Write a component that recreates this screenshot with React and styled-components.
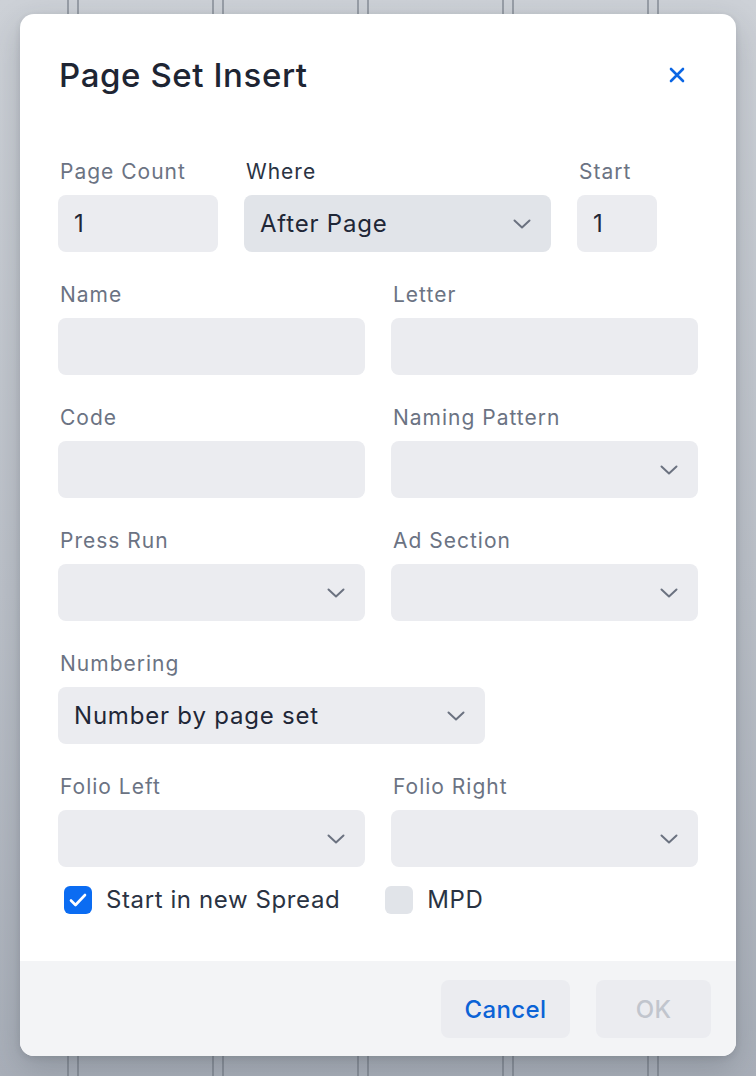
import React from 'react';
import styled, { createGlobalStyle } from 'styled-components';

const GlobalStyle = createGlobalStyle`
  html, body {
    margin: 0;
    padding: 0;
    height: 100%;
  }
  body {
    font-family: Inter, "Noto Sans", "Liberation Sans", sans-serif;
    -webkit-font-smoothing: antialiased;
  }
`;

const Backdrop = styled.div`
  position: fixed;
  inset: 0;
  background: linear-gradient(180deg, #cdd1d7 0%, #bcc1c9 55%, #a9afb9 100%);
  overflow: hidden;
`;

const Sheets = styled.div`
  display: flex;
  gap: 8px;
  margin-left: -68px;
  height: 100%;
`;

const Sheet = styled.div`
  flex: 0 0 133px;
  border-left: 2px solid rgba(110, 117, 128, 0.55);
  border-right: 2px solid rgba(110, 117, 128, 0.55);
`;

const Overlay = styled.div`
  position: fixed;
  inset: 0;
  display: flex;
  justify-content: center;
  align-items: flex-start;
  padding-top: 14px;
`;

const Dialog = styled.div`
  width: 716px;
  background: #ffffff;
  border-radius: 14px;
  box-shadow: 0 12px 32px rgba(40, 48, 60, 0.22), 0 2px 6px rgba(40, 48, 60, 0.12);
  overflow: hidden;
  display: flex;
  flex-direction: column;
`;

const Header = styled.div`
  display: flex;
  align-items: center;
  justify-content: space-between;
  padding: 43px 38px 0 39px;
  height: 36px;
  box-sizing: content-box;
`;

const Title = styled.h2`
  margin: 0;
  font-size: 33px;
  line-height: 36px;
  font-weight: 500;
  color: #1e2533;
  letter-spacing: 0.6px;
`;

const CloseButton = styled.button`
  border: 0;
  background: transparent;
  padding: 0;
  width: 30px;
  height: 30px;
  margin-right: 6px;
  display: flex;
  align-items: center;
  justify-content: center;
  color: #0b66e4;
  cursor: pointer;
`;

const Body = styled.div`
  padding: 67px 38px 47px;
  display: flex;
  flex-direction: column;
  gap: 31px;
`;

const Row = styled.div`
  display: flex;
  gap: 26px;
`;

const Field = styled.div`
  display: flex;
  flex-direction: column;
  gap: 11px;
  width: ${(p) => p.$width}px;
`;

const Label = styled.label`
  font-size: 21px;
  line-height: 24px;
  font-weight: 400;
  color: ${(p) => (p.$active ? '#2a3343' : '#6b7383')};
  padding-left: 2px;
  letter-spacing: 1px;
`;

const Control = styled.div`
  height: 57px;
  border-radius: 8px;
  background: ${(p) => (p.$active ? '#e1e4e9' : '#ebecf0')};
  display: flex;
  align-items: center;
  justify-content: space-between;
  padding: 0 20px 0 16px;
  box-sizing: border-box;
  font-size: 24px;
  color: #1f2737;
`;

const Value = styled.span`
  letter-spacing: 0.8px;
`;

const Chevron = () => (
  <svg width="18" height="10" viewBox="0 0 18 10" fill="none">
    <path d="M1.5 1.5 L9 8.5 L16.5 1.5" stroke="#6b7280" strokeWidth="2" strokeLinecap="round" strokeLinejoin="round" />
  </svg>
);

const Checks = styled.div`
  display: flex;
  align-items: center;
  gap: 45px;
  margin-top: -13px;
  padding-left: 6px;
`;

const CheckItem = styled.label`
  display: flex;
  align-items: center;
  gap: 14px;
  font-size: 24px;
  color: #2a3343;
  letter-spacing: 0.6px;
`;

const Box = styled.span`
  width: 28px;
  height: 28px;
  border-radius: 6px;
  background: ${(p) => (p.$checked ? '#0b6cf2' : '#e1e4e9')};
  display: flex;
  align-items: center;
  justify-content: center;
`;

const Footer = styled.div`
  background: #f3f4f6;
  padding: 19px 25px 18px;
  display: flex;
  justify-content: flex-end;
  gap: 26px;
`;

const Button = styled.button`
  height: 58px;
  min-width: ${(p) => p.$width}px;
  border: 0;
  border-radius: 8px;
  background: #ebecf0;
  font-family: inherit;
  font-size: 24px;
  font-weight: 500;
  color: ${(p) => (p.$disabled ? '#c1c5cd' : '#0b63d6')};
  letter-spacing: 0.4px;
  cursor: ${(p) => (p.$disabled ? 'default' : 'pointer')};
`;

const fieldRows = [
  [
    { label: 'Name', width: 307 },
    { label: 'Letter', width: 307 },
  ],
  [
    { label: 'Code', width: 307 },
    { label: 'Naming Pattern', width: 307, select: true },
  ],
  [
    { label: 'Press Run', width: 307, select: true },
    { label: 'Ad Section', width: 307, select: true },
  ],
  [{ label: 'Numbering', width: 427, select: true, value: 'Number by page set' }],
  [
    { label: 'Folio Left', width: 307, select: true },
    { label: 'Folio Right', width: 307, select: true },
  ],
];

const FormField = ({ label, width, select, value, active }) => (
  <Field $width={width}>
    <Label $active={active}>{label}</Label>
    <Control $active={active}>
      <Value>{value}</Value>
      {select && <Chevron />}
    </Control>
  </Field>
);

export default function App() {
  return (
    <>
      <GlobalStyle />
      <Backdrop>
        <Sheets>
          {Array.from({ length: 7 }).map((_, i) => (
            <Sheet key={i} />
          ))}
        </Sheets>
      </Backdrop>
      <Overlay>
        <Dialog>
          <Header>
            <Title>Page Set Insert</Title>
            <CloseButton aria-label="Close">
              <svg width="16" height="16" viewBox="0 0 16 16" fill="none">
                <path d="M2 2 L14 14 M14 2 L2 14" stroke="currentColor" strokeWidth="2.6" strokeLinecap="round" />
              </svg>
            </CloseButton>
          </Header>
          <Body>
            <Row>
              <FormField label="Page Count" width={160} value="1" />
              <FormField label="Where" width={307} value="After Page" select active />
              <FormField label="Start" width={80} value="1" />
            </Row>
            {fieldRows.map((row, i) => (
              <Row key={i}>
                {row.map((f) => (
                  <FormField key={f.label} {...f} />
                ))}
              </Row>
            ))}
            <Checks>
              <CheckItem>
                <Box $checked>
                  <svg width="18" height="14" viewBox="0 0 18 14" fill="none">
                    <path d="M2 7.5 L6.5 12 L16 2" stroke="#fff" strokeWidth="2.6" strokeLinecap="round" strokeLinejoin="round" />
                  </svg>
                </Box>
                Start in new Spread
              </CheckItem>
              <CheckItem>
                <Box />
                MPD
              </CheckItem>
            </Checks>
          </Body>
          <Footer>
            <Button $width={129}>Cancel</Button>
            <Button $width={115} $disabled>
              OK
            </Button>
          </Footer>
        </Dialog>
      </Overlay>
    </>
  );
}
